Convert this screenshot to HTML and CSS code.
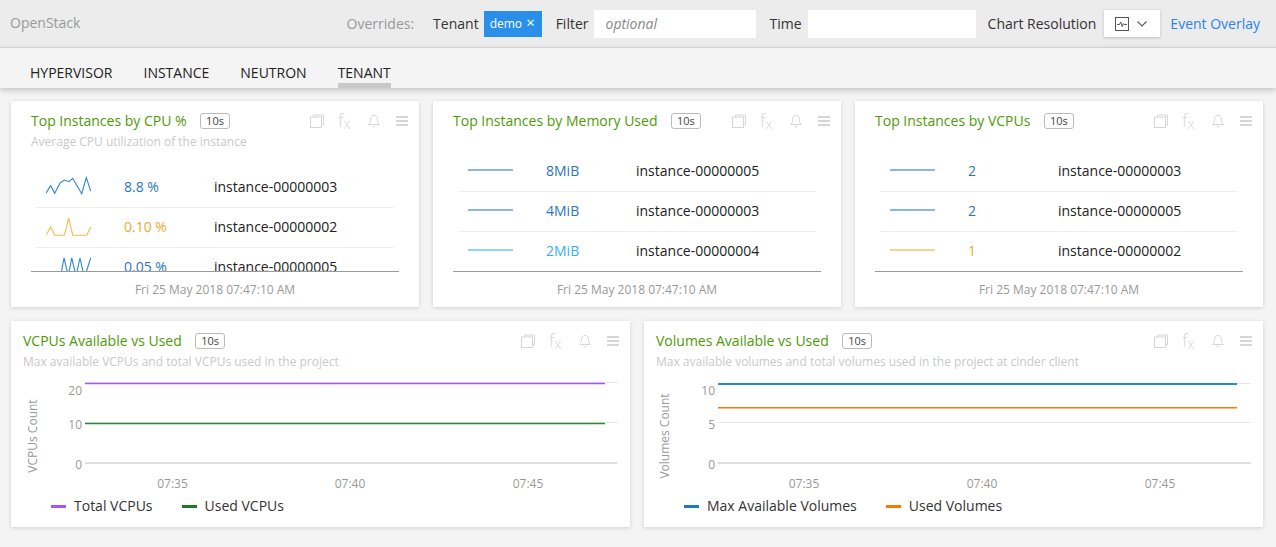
FILE: index.html
```html
<!doctype html>
<html>
<head>
  <link rel="stylesheet" href="styles.css">
</head>
<body>
  <svg class="defs" width="0" height="0">
    <symbol id="i-copy" viewBox="0 0 14 14">
      <path d="M3.5 3V1h10v10h-2" fill="none" stroke="currentColor"/>
      <rect x="0.5" y="3" width="11" height="10.5" fill="none" stroke="currentColor"/>
    </symbol>
    <symbol id="i-bell" viewBox="0 0 14 14">
      <path d="M7 1.5c-2.6 0-3.5 2-3.5 4.2 0 2.5-.7 3.6-1.8 4.8h10.6c-1.100-1.200-1.800-2.300-1.800-4.800C10.500 3.500 9.600 1.500 7 1.500z" fill="none" stroke="currentColor"/>
      <path d="M5.500 12.200c.4 1 2.600 1 3 0" fill="none" stroke="currentColor"/>
    </symbol>
    <symbol id="i-menu" viewBox="0 0 14 14">
      <path d="M1 2h12v2H1zM1 6h12v2H1zM1 10h12v2H1z" fill="currentColor"/>
    </symbol>
  </svg>

  <header class="topbar">
    <div class="brand">OpenStack</div>
    <div class="overrides">
      <span class="overrides-label">Overrides:</span>
      <span class="field-label tenant-label">Tenant</span>
      <span class="chip">demo <span class="chip-x">&#xd7;</span></span>
      <span class="field-label filter-label">Filter</span>
      <input class="field filter-input" type="text" placeholder="optional">
      <span class="field-label time-label">Time</span>
      <input class="field time-input" type="text">
      <span class="field-label res-label">Chart Resolution</span>
      <div class="res-button">
        <svg width="14" height="14" viewBox="0 0 14 14">
          <rect x="0.500" y="0.500" width="13" height="13" fill="none" stroke="#555"/>
          <path d="M2 7.500h2.500l1.200-2.500 1.500 4.500 1.200-3 .8 1H12" fill="none" stroke="#555"/>
        </svg>
        <svg width="12" height="8" viewBox="0 0 12 8">
          <path d="M1.500 1.500L6 6l4.500-4.500" fill="none" stroke="#555" stroke-width="1.100"/>
        </svg>
      </div>
      <a class="overlay-link">Event Overlay</a>
    </div>
  </header>

  <nav class="tabs">
    <div class="tab">HYPERVISOR</div>
    <div class="tab">INSTANCE</div>
    <div class="tab">NEUTRON</div>
    <div class="tab active">TENANT</div>
  </nav>

  <main class="dash">
    <div class="row row-3">

      <section class="card card-list">
        <div class="card-head">
          <div class="title-row">
            <span class="title">Top Instances by CPU %</span>
            <span class="badge">10s</span>
            <div class="tools">
              <svg class="tool"><use href="#i-copy"/></svg>
              <span class="tool-fx">f<span>x</span></span>
              <svg class="tool"><use href="#i-bell"/></svg>
              <svg class="tool"><use href="#i-menu"/></svg>
            </div>
          </div>
          <div class="desc">Average CPU utilization of the instance</div>
        </div>
        <div class="list list-offset">
          <div class="item">
            <svg class="spark" viewBox="0 0 45 30"><polyline class="s-blue" points="0,22.300 4.700,14.700 8.700,22.300 14,12 18.300,9 23,10.700 26.700,7.300 31.300,15.300 35.700,22.700 40.300,6.700 44.700,20"/></svg>
            <span class="val c-blue">8.8 %</span>
            <span class="name">instance-00000003</span>
          </div>
          <div class="item">
            <svg class="spark" viewBox="0 0 45 30"><polyline class="s-orange" points="0,24.300 4.700,16 8.700,24.300 18.300,24.300 22.700,7 26.700,24.300 40.700,24.300 44.700,16"/></svg>
            <span class="val c-orange">0.10 %</span>
            <span class="name">instance-00000002</span>
          </div>
          <div class="item">
            <svg class="spark" viewBox="0 0 45 30"><polyline class="s-blue" points="14.700,25 18,7 22.300,25 25.700,7 30,25 34,7 38,25 39,25 44.700,7"/></svg>
            <span class="val c-blue">0.05 %</span>
            <span class="name">instance-00000005</span>
          </div>
        </div>
        <div class="stamp">Fri 25 May 2018 07:47:10 AM</div>
      </section>

      <section class="card card-list">
        <div class="card-head">
          <div class="title-row">
            <span class="title">Top Instances by Memory Used</span>
            <span class="badge">10s</span>
            <div class="tools">
              <svg class="tool"><use href="#i-copy"/></svg>
              <span class="tool-fx">f<span>x</span></span>
              <svg class="tool"><use href="#i-bell"/></svg>
              <svg class="tool"><use href="#i-menu"/></svg>
            </div>
          </div>
        </div>
        <div class="list">
          <div class="item">
            <span class="flat f-blue"></span>
            <span class="val c-blue">8MiB</span>
            <span class="name">instance-00000005</span>
          </div>
          <div class="item">
            <span class="flat f-blue"></span>
            <span class="val c-blue">4MiB</span>
            <span class="name">instance-00000003</span>
          </div>
          <div class="item">
            <span class="flat f-sky"></span>
            <span class="val c-sky">2MiB</span>
            <span class="name">instance-00000004</span>
          </div>
        </div>
        <div class="stamp">Fri 25 May 2018 07:47:10 AM</div>
      </section>

      <section class="card card-list">
        <div class="card-head">
          <div class="title-row">
            <span class="title">Top Instances by VCPUs</span>
            <span class="badge">10s</span>
            <div class="tools">
              <svg class="tool"><use href="#i-copy"/></svg>
              <span class="tool-fx">f<span>x</span></span>
              <svg class="tool"><use href="#i-bell"/></svg>
              <svg class="tool"><use href="#i-menu"/></svg>
            </div>
          </div>
        </div>
        <div class="list">
          <div class="item">
            <span class="flat f-blue"></span>
            <span class="val c-blue">2</span>
            <span class="name">instance-00000003</span>
          </div>
          <div class="item">
            <span class="flat f-blue"></span>
            <span class="val c-blue">2</span>
            <span class="name">instance-00000005</span>
          </div>
          <div class="item">
            <span class="flat f-orange"></span>
            <span class="val c-orange">1</span>
            <span class="name">instance-00000002</span>
          </div>
        </div>
        <div class="stamp">Fri 25 May 2018 07:47:10 AM</div>
      </section>
    </div>

    <div class="row row-2">

      <section class="card card-chart">
        <div class="card-head">
          <div class="title-row">
            <span class="title">VCPUs Available vs Used</span>
            <span class="badge">10s</span>
            <div class="tools">
              <svg class="tool"><use href="#i-copy"/></svg>
              <span class="tool-fx">f<span>x</span></span>
              <svg class="tool"><use href="#i-bell"/></svg>
              <svg class="tool"><use href="#i-menu"/></svg>
            </div>
          </div>
          <div class="desc">Max available VCPUs and total VCPUs used in the project</div>
        </div>
        <svg class="chart" width="619" height="125" viewBox="0 0 619 125">
          <line class="grid" x1="74" x2="606.500" y1="11.500" y2="11.500"/>
          <line class="grid" x1="74" x2="606.500" y1="51.500" y2="51.500"/>
          <line class="axis" x1="74" x2="606.500" y1="92" y2="92"/>
          <line class="data-purple" x1="74" x2="594" y1="12.500" y2="12.500"/>
          <line class="data-green" x1="74" x2="594" y1="52.500" y2="52.500"/>
          <text class="tick" x="71" y="24" text-anchor="end">20</text>
          <text class="tick" x="71" y="58" text-anchor="end">10</text>
          <text class="tick" x="71" y="98" text-anchor="end">0</text>
          <text class="tick" x="161.500" y="117" text-anchor="middle">07:35</text>
          <text class="tick" x="339" y="117" text-anchor="middle">07:40</text>
          <text class="tick" x="517" y="117" text-anchor="middle">07:45</text>
          <text class="tick" text-anchor="middle" transform="translate(26 65) rotate(-90)">VCPUs Count</text>
        </svg>
        <div class="legend">
          <span class="legend-item"><i class="swatch sw-purple"></i>Total VCPUs</span>
          <span class="legend-item"><i class="swatch sw-green"></i>Used VCPUs</span>
        </div>
      </section>

      <section class="card card-chart">
        <div class="card-head">
          <div class="title-row">
            <span class="title">Volumes Available vs Used</span>
            <span class="badge">10s</span>
            <div class="tools">
              <svg class="tool"><use href="#i-copy"/></svg>
              <span class="tool-fx">f<span>x</span></span>
              <svg class="tool"><use href="#i-bell"/></svg>
              <svg class="tool"><use href="#i-menu"/></svg>
            </div>
          </div>
          <div class="desc">Max available volumes and total volumes used in the project at cinder client</div>
        </div>
        <svg class="chart" width="619" height="125" viewBox="0 0 619 125">
          <line class="grid" x1="74" x2="606.500" y1="12.500" y2="12.500"/>
          <line class="grid" x1="74" x2="606.500" y1="51.500" y2="51.500"/>
          <line class="axis" x1="74" x2="606.500" y1="92" y2="92"/>
          <line class="data-blue" x1="74" x2="593" y1="13" y2="13"/>
          <line class="data-orange" x1="74" x2="593" y1="36.750" y2="36.750"/>
          <text class="tick" x="71" y="24" text-anchor="end">10</text>
          <text class="tick" x="71" y="58" text-anchor="end">5</text>
          <text class="tick" x="71" y="98" text-anchor="end">0</text>
          <text class="tick" x="160" y="117" text-anchor="middle">07:35</text>
          <text class="tick" x="338" y="117" text-anchor="middle">07:40</text>
          <text class="tick" x="516" y="117" text-anchor="middle">07:45</text>
          <text class="tick" text-anchor="middle" transform="translate(25 65) rotate(-90)">Volumes Count</text>
        </svg>
        <div class="legend">
          <span class="legend-item"><i class="swatch sw-blue"></i>Max Available Volumes</span>
          <span class="legend-item"><i class="swatch sw-orange"></i>Used Volumes</span>
        </div>
      </section>
    </div>
  </main>
</body>
</html>
```

FILE: styles.css
```css
html, body {
  margin: 0;
  padding: 0;
  height: 100%;
  overflow: hidden;
  background-color: #f4f4f4;
  color: #333;
  font-family: "Open Sans", sans-serif;
  font-size: 14px;
}
.defs {
  position: absolute;
}

/* top bar */
.topbar {
  display: flex;
  align-items: center;
  justify-content: space-between;
  box-sizing: border-box;
  height: 48px;
  padding: 0 16px 0 10px;
  background-color: #ececec;
  border-bottom: 1px solid #dcdcdc;
}
.brand {
  margin-bottom: 2px;
  color: #999;
}
.overrides {
  display: flex;
  align-items: center;
}
.overrides-label {
  color: #999;
  margin-right: 19px;
}
.field-label {
  color: #333;
}
.chip {
  box-sizing: border-box;
  width: 58px;
  height: 26px;
  margin: 0 14px 0 5px;
  padding-left: 6px;
  background-color: #2a8fe8;
  color: #fff;
  font-size: 12px;
  line-height: 22px;
}
.chip-x {
  margin-left: 1px;
  font-size: 15px;
}
.field {
  box-sizing: border-box;
  height: 28px;
  border: 0;
  background-color: #fff;
  font-family: inherit;
  font-size: 14px;
}
.field::placeholder {
  color: #888;
  font-style: italic;
}
.filter-input {
  width: 162px;
  margin: 0 14px 0 5px;
  padding-left: 12px;
}
.time-input {
  width: 168px;
  margin: 0 12px 0 6px;
}
.res-button {
  display: flex;
  align-items: center;
  gap: 7px;
  box-sizing: border-box;
  width: 56px;
  height: 27px;
  margin: 0 10px 0 8px;
  padding-left: 11px;
  background-color: #fff;
  box-shadow: 0 1px 3px rgba(0,0,0,0.2);
}
.overlay-link {
  color: #2a82f0;
}

/* tabs */
.tabs {
  display: flex;
  gap: 31px;
  height: 40px;
  padding-left: 30px;
  background-color: #f4f4f4;
  box-shadow: 0 2px 6px rgba(0,0,0,0.22);
}
.tab {
  box-sizing: border-box;
  height: 40px;
  padding-top: 15px;
  line-height: 20px;
  color: #222;
}
.tab.active {
  border-bottom: 5px solid #c8c8c8;
}

/* cards */
.dash {
  display: flex;
  flex-direction: column;
  gap: 14px;
  padding: 13px 13px 0 11px;
}
.row {
  display: grid;
  grid-template-rows: 206px;
  gap: 14px;
}
.row-3 {
  grid-template-columns: repeat(3, 1fr);
}
.row-2 {
  grid-template-columns: repeat(2, 1fr);
}
.card {
  display: flex;
  flex-direction: column;
  min-width: 0;
  min-height: 0;
  background-color: #fff;
  box-shadow: 0 1px 4px rgba(0,0,0,0.15);
}
.card-head {
  box-sizing: border-box;
  flex: none;
  height: 50px;
  padding: 9px 10px 0 20px;
}
.card-chart .card-head {
  padding-left: 12px;
}
.title-row {
  display: flex;
  align-items: center;
  height: 20px;
}
.title {
  color: #4f9a08;
}
.badge {
  box-sizing: border-box;
  height: 16px;
  margin: 2px 0 0 13.500px;
  padding: 0 5px;
  border: 1px solid #bbb;
  border-radius: 3px;
  color: #444;
  font-size: 11px;
  line-height: 13px;
}
.tools {
  display: flex;
  align-items: center;
  gap: 14.500px;
  margin: 2px 0 0 auto;
  color: #d6d6d6;
}
.tool {
  width: 14px;
  height: 14px;
}
.tool-fx {
  width: 14px;
  font-size: 18px;
  font-weight: 300;
  line-height: 14px;
}
.tool-fx span {
  font-size: 14px;
  position: relative;
  top: 2px;
}
.desc {
  margin-top: 2px;
  color: #c9c9c9;
  font-size: 12px;
  line-height: 20px;
}

/* top-N lists */
.list {
  flex: 1;
  min-height: 0;
  margin: 0 20px;
  padding: 1px 5px 0;
  overflow: hidden;
  border-bottom: 1px solid #999;
}
.list-offset {
  padding-top: 17px;
}
.item {
  display: grid;
  grid-template-columns: 88px 90px 1fr;
  align-items: center;
  box-sizing: border-box;
  height: 40px;
  padding-bottom: 3px;
  border-bottom: 1px solid #eee;
  color: #222;
}
.item:last-child {
  border-bottom-color: transparent;
}
.spark {
  width: 45px;
  height: 30px;
  margin-left: 10px;
}
.spark polyline {
  fill: none;
  stroke-width: 1.100;
}
.s-blue { stroke: #2c86d0; }
.s-orange { stroke: #f0bc4c; }
.flat {
  width: 45px;
  height: 2px;
  margin-left: 10px;
}
.f-blue { background-color: #86b8e0; }
.f-sky { background-color: #8ad6ff; }
.f-orange { background-color: #f2d68c; }
.c-blue { color: #2a74c4; }
.c-sky { color: #38aef8; }
.c-orange { color: #f0a830; }
.stamp {
  flex: none;
  height: 35px;
  color: #999;
  font-size: 12px;
  line-height: 35px;
  text-align: center;
}

/* time-series charts */
.chart {
  display: block;
  flex: none;
}
.grid {
  stroke: #e6e6e6;
}
.axis {
  stroke: #dedede;
  stroke-width: 2;
}
.data-purple { stroke: #a855f7; stroke-width: 1.500; }
.data-green { stroke: #2a8a3a; stroke-width: 1.500; }
.data-blue { stroke: #2a88d0; stroke-width: 2; }
.data-orange { stroke: #f57c00; stroke-width: 1.500; }
.tick {
  fill: #999;
  font-size: 12px;
}
.legend {
  display: flex;
  gap: 29px;
  height: 20px;
  padding-left: 40px;
  line-height: 20px;
}
.legend-item {
  display: flex;
  align-items: center;
  color: #333;
}
.swatch {
  width: 15px;
  height: 3px;
  margin-right: 8px;
}
.sw-purple { background-color: #a855f7; }
.sw-green { background-color: #1b7a1f; }
.sw-blue { background-color: #1f78c8; }
.sw-orange { background-color: #f57c00; }
```
